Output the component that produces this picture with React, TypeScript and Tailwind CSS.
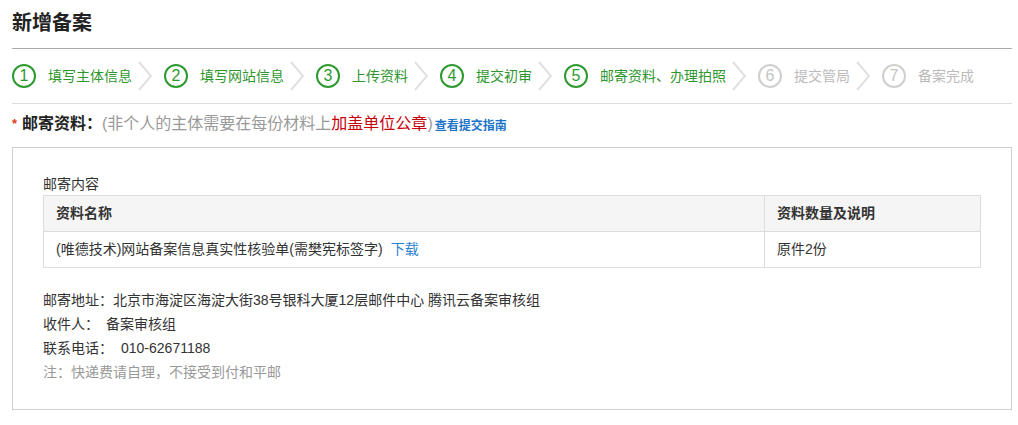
const steps = [
  { n: 1, label: "填写主体信息", done: true },
  { n: 2, label: "填写网站信息", done: true },
  { n: 3, label: "上传资料", done: true },
  { n: 4, label: "提交初审", done: true },
  { n: 5, label: "邮寄资料、办理拍照", done: true },
  { n: 6, label: "提交管局", done: false },
  { n: 7, label: "备案完成", done: false },
];

const Chevron = () => (
  <svg width="14" height="30" viewBox="0 0 14 30" className="ml-[6px] mr-[12px] shrink-0">
    <polyline points="1,1 13,15 1,29" fill="none" stroke="#e0e0e0" strokeWidth="2" />
  </svg>
);

export default function App() {
  return (
    <div
      className="w-[1018px] h-[425px] bg-white pl-[12px] pr-[6px] text-[#333]"
      style={{ fontFamily: '"Liberation Sans", "Noto Sans CJK SC", sans-serif' }}
    >
      <h1 className="pt-[9px] h-[37px] text-[20px] leading-[28px] font-bold text-[#222]">新增备案</h1>
      <div className="mt-[11px] border-t border-[#aaa]" />

      <div className="flex items-center h-[55px] border-b border-[#ddd]">
        {steps.map((s, i) => (
          <div key={s.n} className="flex items-center">
            <span
              className={
                s.done
                  ? "flex items-center justify-center w-6 h-6 rounded-full border-2 border-[#2f9a2f] text-[16px] text-[#2f9a2f] leading-none"
                  : "flex items-center justify-center w-6 h-6 rounded-full border-2 border-[#cfcfcf] text-[16px] text-[#c4c4c4] leading-none"
              }
            >
              {s.n}
            </span>
            <span className={s.done ? "ml-3 text-[14px] text-[#2f962f]" : "ml-3 text-[14px] text-[#bbb]"}>
              {s.label}
            </span>
            {i < steps.length - 1 && <Chevron />}
          </div>
        ))}
      </div>

      <div className="flex items-center mt-[8px] h-[24px] mb-[11px] text-[16px]">
        <span className="text-[#e03c1c] text-[13px] font-bold w-[10px]">*</span>
        <span className="font-bold text-[#222]">邮寄资料：</span>
        <span className="text-[#999]">(非个人的主体需要在每份材料上</span>
        <span className="text-[#c8000a]">加盖单位公章</span>
        <span className="text-[#999]">)</span>
        <a className="ml-[2px] mt-[3px] text-[12px] font-bold text-[#1a73c8]">查看提交指南</a>
      </div>

      <div className="border border-[#d0d0d0] h-[263px] pt-[26px] px-[30px] text-[14px]">
        <div className="leading-[20px] mb-px">邮寄内容</div>
        <table className="w-full border-collapse border border-[#ddd]">
          <thead>
            <tr className="bg-[#f5f5f5] h-[36px]">
              <th className="text-left font-bold pl-3 border border-[#ddd] text-[#333]">资料名称</th>
              <th className="text-left font-bold pl-3 border border-[#ddd] w-[216px] text-[#333]">资料数量及说明</th>
            </tr>
          </thead>
          <tbody>
            <tr className="h-[36px]">
              <td className="pl-3 border border-[#ddd]">
                (唯德技术)网站备案信息真实性核验单(需樊宪标签字)
                <a className="ml-2 text-[#2b7fd0]">下载</a>
              </td>
              <td className="pl-3 border border-[#ddd]">原件2份</td>
            </tr>
          </tbody>
        </table>

        <div className="mt-[20px] leading-[24px]">
          <div>邮寄地址：北京市海淀区海淀大街38号银科大厦12层邮件中心 腾讯云备案审核组</div>
          <div className="flex">
            <span className="w-[63px]">收件人：</span>
            <span>备案审核组</span>
          </div>
          <div className="flex">
            <span className="w-[78px]">联系电话：</span>
            <span>010-62671188</span>
          </div>
          <div className="text-[#999]">注：快递费请自理，不接受到付和平邮</div>
        </div>
      </div>
    </div>
  );
}
